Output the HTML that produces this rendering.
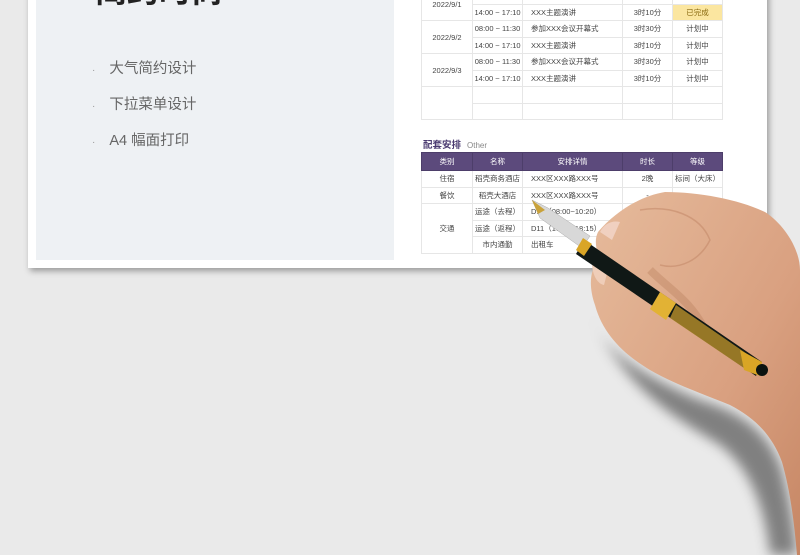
<!DOCTYPE html>
<html><head><meta charset="utf-8"><style>
*{margin:0;padding:0;box-sizing:border-box}
body{width:800px;height:555px;overflow:hidden;background:#eaeaea;font-family:"Liberation Sans","Noto Sans CJK SC",sans-serif;position:relative}
.paper{position:absolute;left:28px;top:-10px;width:739px;height:278px;background:#fff;box-shadow:2px 3px 6px rgba(0,0,0,.35)}
.left{position:absolute;left:36px;top:0;width:358px;height:260px;background:#eef1f4}
.title{position:absolute;left:95px;top:-34px;font-size:32px;font-weight:bold;color:#222}
.bl{position:absolute;left:92px;font-size:14.5px;color:#666}
.bl span{font-size:10px;color:#999;margin-right:14px}
table{position:absolute;border-collapse:collapse;font-size:7.5px;color:#444;table-layout:fixed}
td{border:1px solid #e6e6e6;text-align:center;height:16.5px;white-space:nowrap;overflow:hidden}
td.l{text-align:left;padding-left:8px}
th{background:#5c4a7c;color:#fff;font-weight:normal;height:18px;border:1px solid #4d3e6a}
.sec{position:absolute;left:423px;top:137px;font-size:9.5px;font-weight:bold;color:#4a3a70}
.sec span{font-weight:normal;color:#888;font-size:8px;margin-left:6px}
</style></head><body>
<div class="paper"></div>
<div class="left"></div>
<div class="title">简约时尚</div>
<div class="bl" style="top:57px"><span>·</span>大气简约设计</div>
<div class="bl" style="top:93px"><span>·</span>下拉菜单设计</div>
<div class="bl" style="top:129px"><span>·</span>A4 幅面打印</div>
<table style="left:421px;top:-13px;width:301px">
<colgroup><col style="width:51px"><col style="width:50px"><col style="width:100px"><col style="width:50px"><col style="width:50px"></colgroup>
<tr><td rowspan="2">2022/9/1</td><td>08:00 ~ 11:30</td><td class="l">参加XXX会议开幕式</td><td>3时30分</td><td>已完成</td></tr>
<tr><td>14:00 ~ 17:10</td><td class="l">XXX主题演讲</td><td>3时10分</td><td style="background:#fbe6a0;color:#8a6a10">已完成</td></tr>
<tr><td rowspan="2">2022/9/2</td><td>08:00 ~ 11:30</td><td class="l">参加XXX会议开幕式</td><td>3时30分</td><td>计划中</td></tr>
<tr><td>14:00 ~ 17:10</td><td class="l">XXX主题演讲</td><td>3时10分</td><td>计划中</td></tr>
<tr><td rowspan="2">2022/9/3</td><td>08:00 ~ 11:30</td><td class="l">参加XXX会议开幕式</td><td>3时30分</td><td>计划中</td></tr>
<tr><td>14:00 ~ 17:10</td><td class="l">XXX主题演讲</td><td>3时10分</td><td>计划中</td></tr>
<tr><td rowspan="2"></td><td></td><td></td><td></td><td></td></tr>
<tr><td></td><td></td><td></td><td></td></tr>
</table>
<div class="sec">配套安排<span>Other</span></div>
<table style="left:421px;top:152px;width:301px">
<colgroup><col style="width:51px"><col style="width:50px"><col style="width:100px"><col style="width:50px"><col style="width:50px"></colgroup>
<tr><th>类别</th><th>名称</th><th>安排详情</th><th>时长</th><th>等级</th></tr>
<tr><td>住宿</td><td>稻壳商务酒店</td><td class="l">XXX区XXX路XXX号</td><td>2晚</td><td>标间（大床）</td></tr>
<tr><td>餐饮</td><td>稻壳大酒店</td><td class="l">XXX区XXX路XXX号</td><td>-</td><td></td></tr>
<tr><td rowspan="3">交通</td><td>运途（去程）</td><td class="l">D11（08:00~10:20）</td><td>2小时</td><td></td></tr>
<tr><td>运途（返程）</td><td class="l">D11（16:00~18:15）</td><td></td><td></td></tr>
<tr><td>市内通勤</td><td class="l">出租车</td><td></td><td></td></tr>
</table>
<svg style="position:absolute;left:0;top:0" width="800" height="555">
<defs>
<linearGradient id="sk" x1="0" y1="0" x2="1" y2="1"><stop offset="0" stop-color="#e6bb9c"/><stop offset=".6" stop-color="#d9a080"/><stop offset="1" stop-color="#c68664"/></linearGradient>
<filter id="bl"><feGaussianBlur stdDeviation="6"/></filter>
</defs>
<path d="M592,318 C605,350 640,375 700,400 C740,412 768,430 782,470 C790,500 795,530 797,555 L770,555 C765,510 752,470 720,445 C680,420 630,395 592,318Z" fill="rgba(0,0,0,.45)" filter="url(#bl)"/>
<path d="M598,232 C615,212 640,196 665,192 C700,192 740,200 765,212 C785,225 800,250 800,270 L800,555 L797,555 C794,520 790,490 782,462 C772,435 755,418 730,405 C700,393 670,382 650,370 C625,355 603,335 595,305 C588,285 590,268 600,260 C596,250 594,240 598,232Z" fill="url(#sk)"/>
<path d="M640,210 C670,205 700,215 710,240 C700,260 680,270 660,265" fill="none" stroke="#c58a6a" stroke-width="1.5" opacity=".6"/>
<path d="M650,270 C670,290 690,300 705,330" fill="none" stroke="#b57a5a" stroke-width="8" opacity=".35"/>
<path d="M600,232 C604,224 612,220 620,222 L612,240Z" fill="#f0d0c0"/>
<path d="M592,262 C596,256 606,256 610,262 L604,285 C598,284 592,276 592,262Z" fill="#efcdb8"/>
<path d="M532,200 L548,208 L590,236 L582,248 L540,218Z" fill="#d8d8d8" stroke="#aaa" stroke-width=".5"/>
<path d="M532,200 L545,210 L538,214Z" fill="#c9a23a"/>
<path d="M584,240 L762,362 L756,376 L576,254Z" fill="#101816"/>
<path d="M583,238 L592,244 L584,256 L576,250Z" fill="#d9a526"/>
<path d="M660,292 L676,303 L666,320 L650,309Z" fill="#e2b234"/>
<path d="M676,305 L750,356 L744,368 L670,318Z" fill="#b8902a" opacity=".8"/>
<path d="M740,350 L762,362 L760,376 L744,370Z" fill="#d9a526"/>
<circle cx="762" cy="370" r="6" fill="#0a1210"/>
</svg>
</body></html>
